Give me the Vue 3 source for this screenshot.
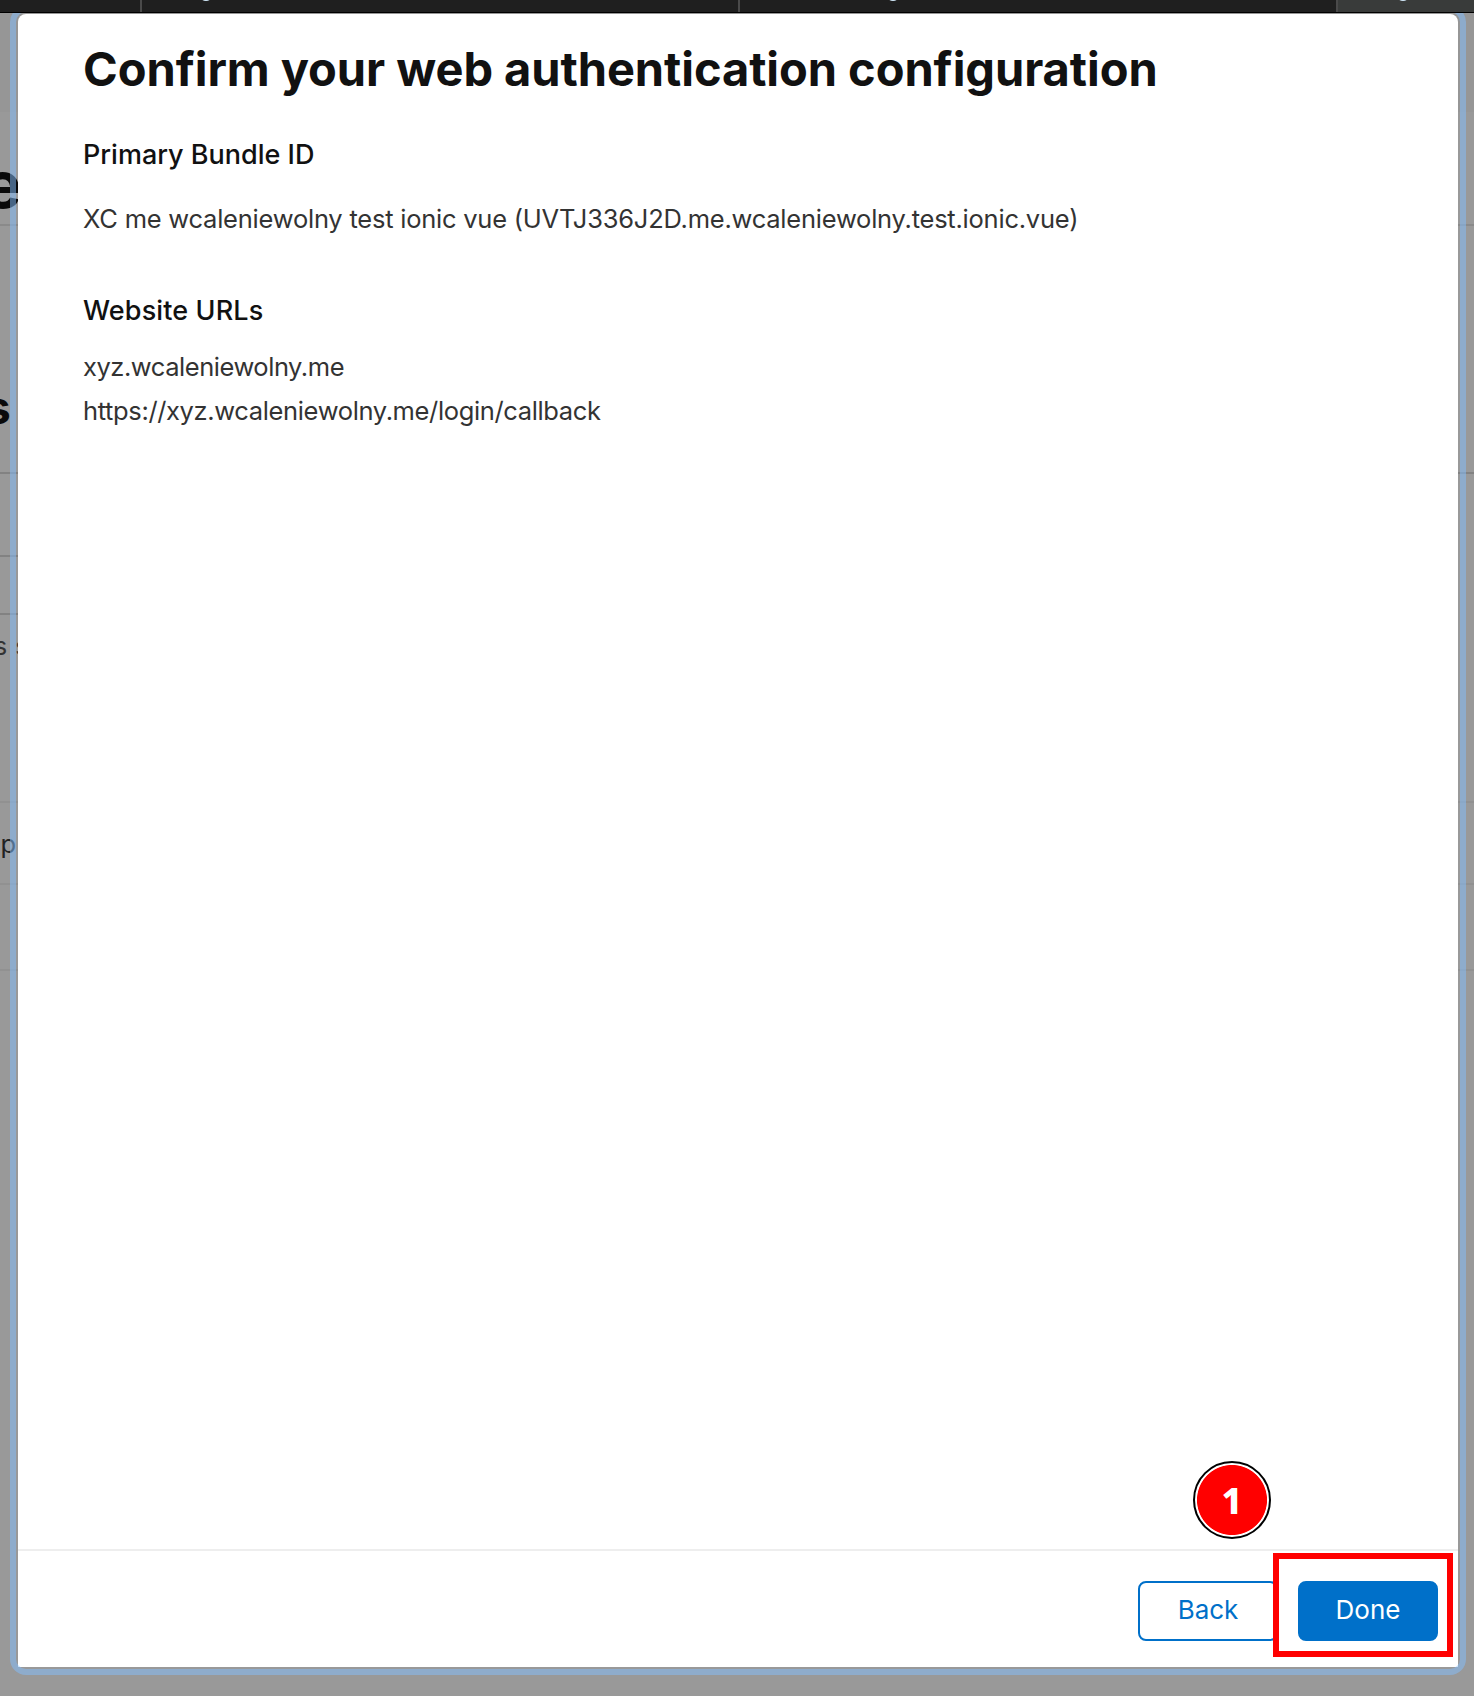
<script setup>
const tabs = [
  { id: 'a', width: 140 },
  { id: 'b', width: 598, mark: 57 },
  { id: 'c', width: 598, mark: 146 },
  { id: 'd', width: 138, mark: 58, active: true },
]

const rules = [
  { top: 224, tone: 'mid' },
  { top: 472, tone: 'dark' },
  { top: 555, tone: 'dark', short: true },
  { top: 613, tone: 'dark', short: true },
  { top: 801, tone: 'light' },
  { top: 883, tone: 'light' },
  { top: 969, tone: 'light' },
]

const urls = ['xyz.wcaleniewolny.me', 'https://xyz.wcaleniewolny.me/login/callback']
</script>

<template>
  <div class="window">
    <div class="tabs">
      <div
        v-for="tab in tabs"
        :key="tab.id"
        class="tab"
        :class="{ active: tab.active }"
        :style="{ width: tab.width + 'px' }"
      >
        <i v-if="tab.mark" class="mark" :style="{ left: tab.mark + 'px' }"></i>
      </div>
    </div>

    <main class="viewport">
      <div class="backdrop" aria-hidden="true">
        <i
          v-for="rule in rules"
          :key="rule.top"
          class="rule"
          :class="[rule.tone, { short: rule.short }]"
          :style="{ top: rule.top - 13 + 'px' }"
        ></i>
        <span class="ghost ghost-title">e</span>
        <span class="ghost ghost-sub">s</span>
        <span class="ghost ghost-text">s s</span>
        <span class="ghost ghost-item">p</span>
      </div>

      <section class="modal">
        <div class="content">
          <h1>Confirm your web authentication configuration</h1>
          <h2>Primary Bundle ID</h2>
          <p class="bundle">XC me wcaleniewolny test ionic vue (UVTJ336J2D.me.wcaleniewolny.test.ionic.vue)</p>
          <h2 class="second">Website URLs</h2>
          <ul>
            <li v-for="(url, i) in urls" :key="url" :class="'url-' + i">{{ url }}</li>
          </ul>
        </div>
        <footer>
          <button class="back">Back</button>
          <button class="done">Done</button>
        </footer>
      </section>
    </main>

    <div class="highlight"></div>
    <div class="step"><span>1</span></div>
  </div>
</template>

<style>
body {
  margin: 0;
}
</style>

<style scoped>
.window {
  position: relative;
  width: 1474px;
  height: 1696px;
  overflow: hidden;
  display: flex;
  flex-direction: column;
  font-family: Inter, "Liberation Sans", sans-serif;
  font-kerning: normal;
}
.tabs {
  display: flex;
  flex: none;
  height: 12px;
  background: #1f1f1f;
  border-bottom: 1px solid #000;
}
.tab {
  position: relative;
  box-sizing: border-box;
  overflow: hidden;
}
.tab + .tab {
  border-left: 2px solid #4a4a4a;
}
.tab.active {
  background: #393b3a;
}
.mark {
  position: absolute;
  top: -13px;
  width: 14px;
  height: 14px;
  border-radius: 50%;
  background: #d3eafb;
}
.viewport {
  position: relative;
  flex: 1;
  overflow: hidden;
  background: #999;
  display: flex;
  flex-direction: column;
}
.backdrop {
  position: absolute;
  inset: 0;
  background: linear-gradient(#969696 99px, transparent 99px);
}
.rule {
  position: absolute;
  left: 0;
  right: 0;
  height: 2px;
}
.rule.short { right: 1400px; }
.rule.light { background: #919191; }
.rule.mid { background: #8a8a8a; }
.rule.dark { background: #828282; }
.ghost {
  position: absolute;
  line-height: 1;
  white-space: nowrap;
  color: #0a0a0a;
}
.ghost-title {
  left: -17px;
  top: 139px;
  font-size: 65px;
  font-weight: 700;
}
.ghost-sub {
  left: -15px;
  top: 371px;
  font-size: 46px;
  font-weight: 700;
}
.ghost-text {
  left: -6px;
  top: 621px;
  font-size: 25px;
  color: #333;
  word-spacing: 1px;
}
.ghost-item {
  left: 0.5px;
  top: 818px;
  font-size: 25.5px;
  color: #222;
}
.modal {
  position: relative;
  flex: none;
  display: flex;
  flex-direction: column;
  width: 1440px;
  height: 1653px;
  margin: 1px 0 0 18px;
  background: #fff;
  border-radius: 8px 8px 0 0;
}
.modal::after {
  content: "";
  position: absolute;
  inset: -8px;
  border: 6px solid rgba(131, 192, 255, 0.5);
  border-radius: 16px;
  pointer-events: none;
}
.content {
  flex: 1;
  padding: 25px 0 0 65px;
  white-space: nowrap;
}
h1 {
  margin: 0;
  font-size: 47px;
  line-height: 60px;
  font-weight: 700;
  letter-spacing: -0.06px;
  color: #111;
}
h2 {
  margin: 36px 0 0;
  font-size: 27px;
  line-height: 40px;
  font-weight: 500;
  color: #111;
}
h2.second {
  margin-top: 50px;
  letter-spacing: 0.12px;
}
p,
ul {
  margin: 22px 0 0;
  padding: 0;
  list-style: none;
  font-size: 25.5px;
  line-height: 44px;
  letter-spacing: -0.23px;
  color: #333;
}
ul {
  margin-top: 14px;
}
.url-0 {
  letter-spacing: -0.46px;
}
.url-1 {
  letter-spacing: -0.36px;
}
footer {
  box-sizing: border-box;
  flex: none;
  display: flex;
  justify-content: flex-end;
  gap: 20px;
  height: 118px;
  padding: 30px 20px 0 0;
  border-top: 2px solid #eee;
}
button {
  box-sizing: border-box;
  width: 140px;
  height: 60px;
  padding: 0 0 3px;
  border: 2px solid #0070c9;
  border-radius: 8px;
  font: 400 26px Inter, "Liberation Sans", sans-serif;
}
.back {
  background: #fff;
  color: #0070c9;
}
.done {
  background: #0070c9;
  color: #fff;
}
.highlight {
  position: absolute;
  left: 1273px;
  top: 1553px;
  box-sizing: border-box;
  width: 180px;
  height: 104px;
  border: 6px solid #f00;
}
.step {
  position: absolute;
  left: 1193px;
  top: 1461px;
  box-sizing: border-box;
  width: 78px;
  height: 78px;
  padding-top: 2px;
  display: flex;
  align-items: center;
  justify-content: center;
  border: 2px solid #000;
  border-radius: 50%;
  background: radial-gradient(circle, #f00 34.6px, #fff 35.4px);
  color: #fff;
  font-family: "Noto Sans", "Open Sans", sans-serif;
  font-size: 36px;
  line-height: 48px;
  font-weight: 800;
}
</style>
